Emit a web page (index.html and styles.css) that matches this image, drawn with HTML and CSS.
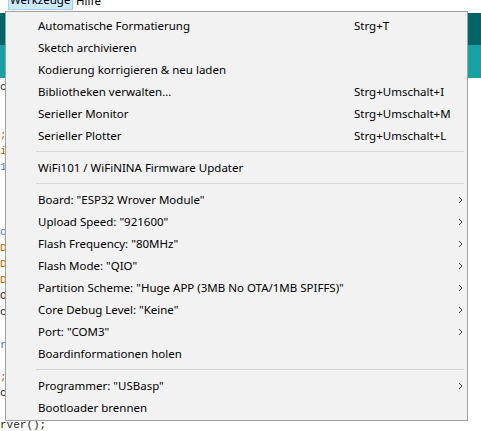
FILE: index.html
```html
<!DOCTYPE html>
<html lang="de">
<head>
<meta charset="utf-8">
<title>Werkzeuge</title>
<link rel="stylesheet" href="styles.css">
</head>
<body>
<div class="app">
  <div class="menubar">
    <span class="mb-item mb-active">Werkzeuge</span>
    <span class="mb-item mb-plain">Hilfe</span>
  </div>
  <div class="toolbar">
    <div class="tb-dark"></div>
    <div class="tb-light"></div>
  </div>
  <div class="editor">
<pre class="code"><span class="k">c</span>
 
 
<span class="o">;</span>
<span class="o">i</span>
<span class="b">1</span>
 
 
 
<span class="b">o</span>
<span class="o">D</span>
<span class="o">D</span>
<span class="o">D</span>
<span class="k">O</span>
<span class="k">c</span>
 
<span class="b">r</span>
 
<span class="o">;</span>
<span class="k">c</span>
 
<span class="k">rver();</span></pre>
  </div>

  <div class="menu">
    <div class="item"><span class="label">Automatische Formatierung</span><span class="key">Strg+T</span><span class="arrow"></span></div>
    <div class="item"><span class="label">Sketch archivieren</span><span class="key"></span><span class="arrow"></span></div>
    <div class="item"><span class="label">Kodierung korrigieren &amp; neu laden</span><span class="key"></span><span class="arrow"></span></div>
    <div class="item"><span class="label">Bibliotheken verwalten...</span><span class="key">Strg+Umschalt+I</span><span class="arrow"></span></div>
    <div class="item"><span class="label">Serieller Monitor</span><span class="key">Strg+Umschalt+M</span><span class="arrow"></span></div>
    <div class="item"><span class="label">Serieller Plotter</span><span class="key">Strg+Umschalt+L</span><span class="arrow"></span></div>
    <div class="sep"></div>
    <div class="item"><span class="label">WiFi101 / WiFiNINA Firmware Updater</span><span class="key"></span><span class="arrow"></span></div>
    <div class="sep"></div>
    <div class="item"><span class="label">Board: "ESP32 Wrover Module"</span><span class="key"></span><span class="arrow"><svg width="5" height="8" viewBox="0 0 5 8"><path d="M1 1 L4 4 L1 7" fill="none" stroke="#444" stroke-width="1"/></svg></span></div>
    <div class="item"><span class="label">Upload Speed: "921600"</span><span class="key"></span><span class="arrow"><svg width="5" height="8" viewBox="0 0 5 8"><path d="M1 1 L4 4 L1 7" fill="none" stroke="#444" stroke-width="1"/></svg></span></div>
    <div class="item"><span class="label">Flash Frequency: "80MHz"</span><span class="key"></span><span class="arrow"><svg width="5" height="8" viewBox="0 0 5 8"><path d="M1 1 L4 4 L1 7" fill="none" stroke="#444" stroke-width="1"/></svg></span></div>
    <div class="item"><span class="label">Flash Mode: "QIO"</span><span class="key"></span><span class="arrow"><svg width="5" height="8" viewBox="0 0 5 8"><path d="M1 1 L4 4 L1 7" fill="none" stroke="#444" stroke-width="1"/></svg></span></div>
    <div class="item"><span class="label">Partition Scheme: "Huge APP (3MB No OTA/1MB SPIFFS)"</span><span class="key"></span><span class="arrow"><svg width="5" height="8" viewBox="0 0 5 8"><path d="M1 1 L4 4 L1 7" fill="none" stroke="#444" stroke-width="1"/></svg></span></div>
    <div class="item"><span class="label">Core Debug Level: "Keine"</span><span class="key"></span><span class="arrow"><svg width="5" height="8" viewBox="0 0 5 8"><path d="M1 1 L4 4 L1 7" fill="none" stroke="#444" stroke-width="1"/></svg></span></div>
    <div class="item"><span class="label">Port: "COM3"</span><span class="key"></span><span class="arrow"><svg width="5" height="8" viewBox="0 0 5 8"><path d="M1 1 L4 4 L1 7" fill="none" stroke="#444" stroke-width="1"/></svg></span></div>
    <div class="item"><span class="label">Boardinformationen holen</span><span class="key"></span><span class="arrow"></span></div>
    <div class="sep"></div>
    <div class="item"><span class="label">Programmer: "USBasp"</span><span class="key"></span><span class="arrow"><svg width="5" height="8" viewBox="0 0 5 8"><path d="M1 1 L4 4 L1 7" fill="none" stroke="#444" stroke-width="1"/></svg></span></div>
    <div class="item"><span class="label">Bootloader brennen</span><span class="key"></span><span class="arrow"></span></div>
  </div>
</div>
</body>
</html>
```

FILE: styles.css
```css
* { box-sizing: border-box; }
html, body {
  margin: 0;
  padding: 0;
  background: #ffffff;
  width: 481px;
  height: 431px;
  overflow: hidden;
}
.app {
  position: relative;
  width: 481px;
  height: 431px;
  overflow: hidden;
  background: #ffffff;
  font-family: "Noto Sans", "Open Sans", sans-serif;
  font-size: 11.5px;
  color: #000;
}
.menubar {
  height: 13px;
  display: flex;
  align-items: flex-start;
  padding-left: 8px;
  gap: 3px;
  background: #ffffff;
  overflow: hidden;
}
.mb-item {
  height: 10px;
  display: flex;
  align-items: flex-end;
  padding: 0 0 3px 0;
  line-height: 12px;
  white-space: nowrap;
}
.mb-active {
  width: 65px;
  padding-left: 1px;
  background: #cce8ff;
  border: 1px solid #99d1ff;
  border-top: none;
}
.mb-plain { padding-left: 0; }
.toolbar { display: flex; flex-direction: column; }
.tb-dark { height: 32px; background: #006468; }
.tb-light { height: 33px; background: #17a1a5; }
.editor {
  padding-top: 1px;
}
.code {
  margin: 0;
  font-family: "Liberation Mono", monospace;
  font-size: 11px;
  line-height: 16.1px;
  color: #222;
}
.code .o { color: #d35400; }
.code .b { color: #3a7bd5; }
.code .k { color: #222; }

.menu {
  position: absolute;
  left: 5px;
  top: 11px;
  width: 463px;
  background: #f2f2f2;
  border: 1px solid #a0a0a0;
  padding: 3px 0 1px 0;
  display: flex;
  flex-direction: column;
}
.item {
  height: 22px;
  display: grid;
  grid-template-columns: 316px 1fr 16px;
  align-items: center;
  padding-left: 32px;
  white-space: nowrap;
}
.label, .key { line-height: 22px; }
.arrow {
  display: flex;
  align-items: center;
  padding-left: 7px;
  height: 22px;
}
.arrow svg { display: block; }
.sep {
  height: 10px;
  margin: 0 3px 0 30px;
  display: flex;
  flex-direction: column;
}
.sep::before {
  content: "";
  display: block;
  height: 1px;
  margin-top: 4px;
  background: #d7d7d7;
}
```
